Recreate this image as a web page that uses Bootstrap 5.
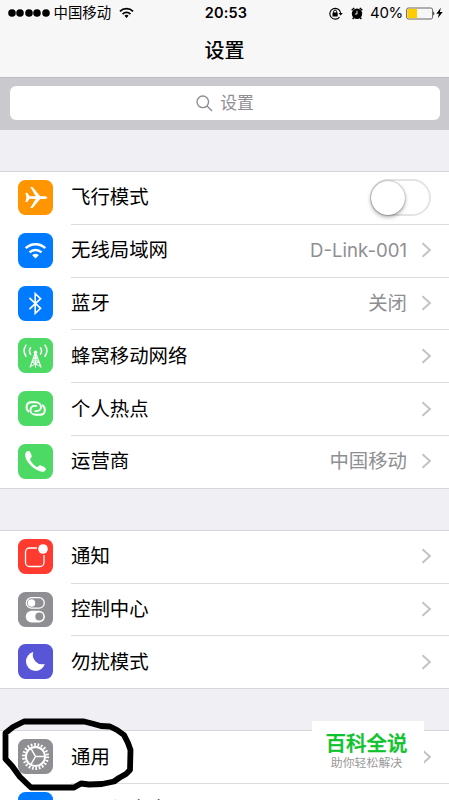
<!DOCTYPE html>
<html lang="zh-CN">
<head>
<meta charset="utf-8">
<meta name="viewport" content="width=device-width, initial-scale=1">
<title>设置</title>
<link rel="stylesheet" href="https://cdn.jsdelivr.net/npm/bootstrap@5.3.0/dist/css/bootstrap.min.css">
<style>
body{font-family:Inter,"Noto Sans CJK SC",sans-serif;background:#efeff4;color:#000;height:800px;overflow:hidden}
.phone{width:449px;height:800px}
.top-bar{height:77px;background:#f7f7f7}
.status{height:26px;font-size:14.5px;line-height:26px;padding-left:8px;padding-right:6px}
.signal{gap:.4px}
.signal i{width:8px;height:8px;border-radius:50%;background:#000;transform:scale(.95)}
.clock{font-size:14.5px;font-weight:600;left:0;right:0;top:0;padding-left:3px;letter-spacing:.2px}
.carrier{font-size:14.4px}
.pct{font-size:15px;margin-left:7px;letter-spacing:-.3px}
.batt{margin-left:3px}
.page-title{font-size:20px;line-height:51px;font-weight:500;height:51px}
.search-wrap{height:53px;background:#c9c9ce;border-top:1px solid #bdbdc1;padding:8px 9px 10px 10px}
.search-box{height:34px;border-radius:6px;color:#8e8e93;font-size:16.8px;line-height:34px}
.search-box svg{margin-right:7px}
.gap-first{height:41px}
.gap-next{height:41px}
.set-group{border-top:1px solid #d6d6da;border-bottom:1px solid #d6d6da;border-radius:0}
.set-row{height:52.8px;padding-left:18px}
.set-row.end-row{height:51.8px}
.tile{width:35px;height:35px;border-radius:7.5px;margin-bottom:1.6px}
.tile svg{width:35px;height:35px;display:block}
.set-body{margin-left:18px;padding-right:17px;border-bottom:1px solid #dcdcdf;font-size:19.4px}
.end-row .set-body{border-bottom:0}
.val{color:#8e8e93;margin-right:14px}
.latin{font-size:18.6px}
.chev{width:11px;height:18px;margin-bottom:1px}
.switch-off{width:61px;height:37px;border:2px solid #e4e4e4;border-radius:19px;background:#fff;margin-right:1px}
.knob{width:34px;height:34px;margin-left:-1px;border-radius:50%;background:#fff;box-shadow:0 2px 4px rgba(0,0,0,.35),0 0 1.5px rgba(0,0,0,.45)}
.orange{background:#ff9500}.blue{background:#007aff}.green{background:#4cd964}.red{background:#ff3b30}.gray{background:#8e8e93}.violet{background:#5856d6}
.ring{left:0;top:710px}
.stamp{left:312px;top:721px;width:112px;height:55px;background:#fff}
.stamp-a{font-size:20.5px;line-height:24px;font-weight:500;color:#0fc22e;padding-top:11px;-webkit-text-stroke:.4px #0fc22e;margin-left:-3px}
.stamp-b{font-size:11.9px;line-height:14px;color:#999;margin-left:-3px}
</style>
</head>
<body>
<svg width="0" height="0" class="position-absolute"><symbol id="chev" viewBox="0 0 11 18"><path d="M1.5 2.2 8.9 9l-7.4 6.8" fill="none" stroke="#c3c3c7" stroke-width="2"/></symbol></svg>
<main class="phone position-relative overflow-hidden">
<header class="top-bar">
 <div class="status d-flex align-items-center justify-content-between position-relative">
  <div class="d-flex align-items-center">
   <span class="signal d-flex"><i></i><i></i><i></i><i></i><i></i></span>
   <span class="carrier ms-1">中国移动</span>
   <svg class="ms-2" width="15" height="12" viewBox="0 0 16 12" fill="none" stroke="#000" stroke-width="1.9"><path d="M1 4.2a10 10 0 0 1 14 0M3.8 7.1a6 6 0 0 1 8.4 0"/><path d="M5.8 9a3.100 3.100 0 0 1 4.400 0L8 11.300z" fill="#000" stroke="none"/></svg>
  </div>
  <div class="clock position-absolute text-center">20:53</div>
  <div class="d-flex align-items-center">
   <svg width="14" height="13" viewBox="0 0 14 13"><path d="M10.500 10.100A5.400 5.400 0 1 1 11.600 6" fill="none" stroke="#000" stroke-width="1.100"/><path d="M9.600 6h4.200l-2.100 2.600z"/><rect x="3.500" y="5.600" width="5.200" height="3.800" rx=".5"/><path d="M4.600 6V4.600a1.500 1.500 0 0 1 3 0V6" fill="none" stroke="#000"/></svg>
   <svg class="ms-2" width="12" height="13" viewBox="0 0 12 13"><circle cx="6" cy="6.700" r="5.200"/><path d="M.7 3.300 3.200 1M11.300 3.300 8.800 1M2.700 10.600l-1 1.400M9.300 10.600l1 1.400" stroke="#000" stroke-width="1.500"/><path d="M6 3.800v3.200H3.900" fill="none" stroke="#fff" stroke-width=".9"/></svg>
   <span class="pct">40%</span>
   <svg class="batt" width="30" height="13" viewBox="0 0 30 13"><rect x=".6" y="1" width="26" height="11" rx="1.800" fill="none" stroke="#555" stroke-width=".9"/><rect x="1.400" y="1.800" width="9.600" height="9.400" fill="#ffcc00"/><path d="M27.400 4.500q2 2 0 4z"/></svg>
   <svg width="7" height="12" viewBox="0 0 7 12"><path d="M4.800.7.3 6.700h2.600L1.800 11.200 6.700 5H3.900z"/></svg>
  </div>
 </div>
 <h1 class="page-title text-center m-0">设置</h1>
</header>
<div class="search-wrap">
 <div class="search-box bg-white d-flex align-items-center justify-content-center">
  <svg width="17" height="17" viewBox="0 0 17 17" fill="none" stroke="#8e8e93" stroke-width="1.400"><circle cx="6.800" cy="6.800" r="5.800"/><path d="m11 11 5 5"/></svg>设置
 </div>
</div>
<div class="gap-first"></div>
<section class="set-group bg-white">
 <div class="set-row d-flex align-items-center"><div class="tile orange"><svg viewBox="0 0 35 35"><path fill="#fff" d="M7.400 12.800h1.800l2.500 3.400 6 .1-5.400-9.300h2.200l7.800 9.200h4.500q2.600.2 2.600 1.400t-2.600 1.400h-4.500L14.500 28h-2.200l5.400-9.100-6-.1-2.500 3.200H7.400l1-4.500z"/></svg></div>
  <div class="set-body d-flex flex-grow-1 align-items-center align-self-stretch justify-content-between">飞行模式<span class="switch-off d-flex align-items-center"><span class="knob"></span></span></div></div>
 <div class="set-row d-flex align-items-center"><div class="tile blue"><svg viewBox="0 0 35 35" fill="none" stroke="#fff" stroke-width="2.500"><path d="M7.700 15.200a14.100 14.100 0 0 1 19.600 0M11.500 19.400a8.700 8.700 0 0 1 12 0"/><path d="M14.200 22.200a4.700 4.700 0 0 1 6.600 0l-3.300 3.300z" fill="#fff" stroke="none"/></svg></div>
  <div class="set-body d-flex flex-grow-1 align-items-center align-self-stretch">无线局域网<span class="val latin ms-auto">D-Link-001</span><svg class="chev"><use href="#chev"/></svg></div></div>
 <div class="set-row d-flex align-items-center"><div class="tile blue"><svg viewBox="0 0 35 35"><path d="m11.400 11.800 11.200 10.500-5.400 5V7.700l5.400 5-11.200 10.500" fill="none" stroke="#fff" stroke-width="1.600"/></svg></div>
  <div class="set-body d-flex flex-grow-1 align-items-center align-self-stretch">蓝牙<span class="val ms-auto">关闭</span><svg class="chev"><use href="#chev"/></svg></div></div>
 <div class="set-row d-flex align-items-center"><div class="tile green"><svg viewBox="0 0 35 35" fill="none" stroke="#fff" stroke-width="1.200"><path d="M17.500 14 12 29.500M17.500 14 23 29.500M17.500 14v15.500M15.500 19.800h4M14 24h7" /><path d="m15.500 19.800 5.500 4.200 1.500 4.500M19.500 19.800 14 24l8.500 4.500M21 24l-8.500 4.500" stroke-width=".9"/><path d="M12.900 9.300a6 6 0 0 0 0 7.400M22.100 9.300a6 6 0 0 1 0 7.400M8.300 6.600a10.500 10.500 0 0 0 0 12.200M26.700 6.600a10.500 10.500 0 0 1 0 12.200" stroke-width="1.500"/><circle cx="17.500" cy="14.300" r="1.700" fill="#fff" stroke="none"/></svg></div>
  <div class="set-body d-flex flex-grow-1 align-items-center align-self-stretch">蜂窝移动网络<svg class="chev ms-auto"><use href="#chev"/></svg></div></div>
 <div class="set-row d-flex align-items-center"><div class="tile green"><svg viewBox="0 0 35 35" fill="none" stroke="#fff" stroke-width="1.900" stroke-linecap="round"><path d="M10.600 20.600C7.300 18 7.900 11.500 13 11.300h4.500c3.200 0 5.500 2 5.500 4.500s-1.800 4.300-4.200 4.300h-1.600"/><path d="M24.800 14.400c3.300 2.600 2.700 9.100-2.400 9.300h-4.500c-3.200 0-5.500-2-5.500-4.500s1.800-4.300 4.200-4.300h1.600"/></svg></div>
  <div class="set-body d-flex flex-grow-1 align-items-center align-self-stretch">个人热点<svg class="chev ms-auto"><use href="#chev"/></svg></div></div>
 <div class="set-row end-row d-flex align-items-center"><div class="tile green"><svg viewBox="0 0 35 35"><path fill="#fff" d="M8 8.200q1.300-1.700 3.200-1.100 2 1.900 2.600 4.900.2 1-1.200 2.200-.9.900-.2 2.200 2.100 3.800 5.800 6.300 1.200.8 2-.1 1.300-1.600 2.600-1.200 3.600 1 4.800 2.900.8 1.500-.7 2.600-2.900 2-7.500-.6-6.800-3.600-10.600-9.900-2.800-5-.8-8.200z"/></svg></div>
  <div class="set-body d-flex flex-grow-1 align-items-center align-self-stretch">运营商<span class="val ms-auto">中国移动</span><svg class="chev"><use href="#chev"/></svg></div></div>
</section>
<div class="gap-next"></div>
<section class="set-group bg-white">
 <div class="set-row d-flex align-items-center"><div class="tile red"><svg viewBox="0 0 35 35"><path d="M19 9h-7.500a4 4 0 0 0-4 4v10.500a4 4 0 0 0 4 4H22a4 4 0 0 0 4-4V16" fill="none" stroke="#fff" stroke-width="1.300"/><circle cx="25" cy="10" r="4.800" fill="#fff"/></svg></div>
  <div class="set-body d-flex flex-grow-1 align-items-center align-self-stretch">通知<svg class="chev ms-auto"><use href="#chev"/></svg></div></div>
 <div class="set-row d-flex align-items-center"><div class="tile gray"><svg viewBox="0 0 35 35"><rect x="8.300" y="5.700" width="18" height="10.500" rx="5.250" fill="none" stroke="#fff" stroke-width="1.300"/><circle cx="13.500" cy="11" r="3.800" fill="#fff"/><rect x="7.700" y="18.700" width="19.200" height="11.700" rx="5.850" fill="#fff"/><circle cx="21.300" cy="24.500" r="4" fill="#8e8e93"/></svg></div>
  <div class="set-body d-flex flex-grow-1 align-items-center align-self-stretch">控制中心<svg class="chev ms-auto"><use href="#chev"/></svg></div></div>
 <div class="set-row end-row d-flex align-items-center"><div class="tile violet"><svg viewBox="0 0 35 35"><path fill="#fff" d="M15.300 8A9.500 9.500 0 0 0 26.800 20 9.600 9.600 0 1 1 15.300 8z"/></svg></div>
  <div class="set-body d-flex flex-grow-1 align-items-center align-self-stretch">勿扰模式<svg class="chev ms-auto"><use href="#chev"/></svg></div></div>
</section>
<div class="gap-next"></div>
<section class="set-group bg-white">
 <div class="set-row d-flex align-items-center"><div class="tile gray"><svg viewBox="0 0 35 35" fill="none" stroke="#fff"><circle cx="17.500" cy="17.500" r="9.600" stroke-width="2"/><circle cx="17.500" cy="17.500" r="12" stroke-width="3" stroke-dasharray="1.700 1.727"/><path d="M17.500 17.500h9M17.500 17.500 13 9.700M17.500 17.500 13 25.300" stroke-width="1.500"/></svg></div>
  <div class="set-body d-flex flex-grow-1 align-items-center align-self-stretch">通用<svg class="chev ms-auto"><use href="#chev"/></svg></div></div>
 <div class="set-row d-flex align-items-center"><div class="tile blue"></div>
  <div class="set-body d-flex flex-grow-1 align-items-center align-self-stretch">显示与亮度<svg class="chev ms-auto"><use href="#chev"/></svg></div></div>
</section>
<div class="stamp position-absolute text-center"><div class="stamp-a">百科全说</div><div class="stamp-b">助你轻松解决</div></div>
<svg class="ring position-absolute" width="140" height="90" viewBox="0 0 140 90" fill="none" stroke="#000" stroke-width="5.800" stroke-linejoin="round"><path d="M24 11.500H84l8 2 9 2.500 9 .5 7 3.500 7 5 4 8 2.500 7-.5 20-4 4-7 4-5 3.500-12 2.500-13 .5-8-1-7 4H31L20 67l-8-11-6.500-7V23L13 17z"/></svg>
</main>
<script src="https://cdn.jsdelivr.net/npm/bootstrap@5.3.0/dist/js/bootstrap.bundle.min.js"></script>
</body>
</html>
